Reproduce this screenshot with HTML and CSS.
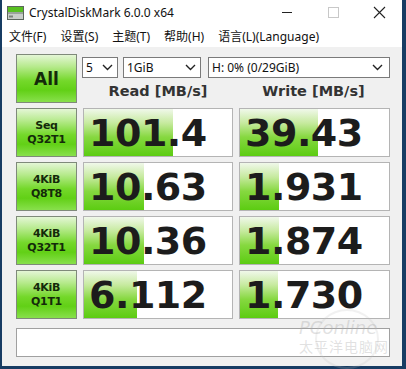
FILE: index.html
```html
<!DOCTYPE html>
<html>
<head>
<meta charset="utf-8">
<link rel="stylesheet" href="styles.css">
</head>
<body>
<div class="window">
  <div class="titlebar">
    <svg class="appicon" width="17" height="14" viewBox="0 0 17 14">
      <rect x="0.5" y="0.5" width="16" height="13" fill="#9aa39a" stroke="#5c665c"/>
      <rect x="1" y="1" width="15" height="5" fill="#58c020"/>
      <rect x="1" y="8" width="15" height="5" fill="#c9cec9"/>
      <rect x="2" y="9.5" width="4" height="2" fill="#7a837a"/>
    </svg>
    <div class="title">CrystalDiskMark 6.0.0 x64</div>
    <div class="controls">
      <svg class="ctl" width="46" height="25" viewBox="0 0 46 25"><line x1="18" y1="12.5" x2="28" y2="12.5" stroke="#222" stroke-width="1"/></svg>
      <svg class="ctl" width="46" height="25" viewBox="0 0 46 25"><rect x="18.5" y="7.5" width="10" height="10" fill="none" stroke="#c8c8c8" stroke-width="1"/></svg>
      <svg class="ctl" width="46" height="25" viewBox="0 0 46 25"><path d="M18 7 L29 18 M29 7 L18 18" stroke="#222" stroke-width="1.1"/></svg>
    </div>
  </div>
  <div class="menubar">
    <span class="menuitem">文件(F)</span>
    <span class="menuitem">设置(S)</span>
    <span class="menuitem">主题(T)</span>
    <span class="menuitem">帮助(H)</span>
    <span class="menuitem">语言(L)(Language)</span>
  </div>
  <div class="content">
    <div class="grid">
      <div class="btn all">All</div>
      <div class="topright">
        <div class="selects">
          <div class="select s-count"><span>5</span><svg width="11" height="7" viewBox="0 0 11 7"><path d="M1 1 L5.5 5.5 L10 1" fill="none" stroke="#222" stroke-width="1.4"/></svg></div>
          <div class="select s-size"><span>1GiB</span><svg width="11" height="7" viewBox="0 0 11 7"><path d="M1 1 L5.5 5.5 L10 1" fill="none" stroke="#222" stroke-width="1.4"/></svg></div>
          <div class="select s-drive"><span>H: 0% (0/29GiB)</span><svg width="11" height="7" viewBox="0 0 11 7"><path d="M1 1 L5.5 5.5 L10 1" fill="none" stroke="#222" stroke-width="1.4"/></svg></div>
        </div>
        <div class="heads">
          <div class="head read">Read [MB/s]</div>
          <div class="head write">Write [MB/s]</div>
        </div>
      </div>

      <div class="btn label">Seq<br>Q32T1</div>
      <div class="val"><div class="bar" style="width:89px"></div><span class="num">101.4</span></div>
      <div class="val"><div class="bar" style="width:78px"></div><span class="num">39.43</span></div>

      <div class="btn label">4KiB<br>Q8T8</div>
      <div class="val"><div class="bar" style="width:60px"></div><span class="num">10.63</span></div>
      <div class="val"><div class="bar" style="width:39px"></div><span class="num">1.931</span></div>

      <div class="btn label">4KiB<br>Q32T1</div>
      <div class="val"><div class="bar" style="width:60px"></div><span class="num">10.36</span></div>
      <div class="val"><div class="bar" style="width:39px"></div><span class="num">1.874</span></div>

      <div class="btn label">4KiB<br>Q1T1</div>
      <div class="val"><div class="bar" style="width:53px"></div><span class="num">6.112</span></div>
      <div class="val"><div class="bar" style="width:38px"></div><span class="num">1.730</span></div>

      <div class="comment"></div>
    </div>
    <div class="watermark">
      <div class="wm-circle"></div>
      <div class="wm-en">PConline</div>
      <div class="wm-cn">太平洋电脑网</div>
    </div>
  </div>
</div>
</body>
</html>
```

FILE: styles.css
```css
* { box-sizing: border-box; }
html, body { margin: 0; padding: 0; }
body {
  width: 406px;
  height: 369px;
  background: #173c63;
  overflow: hidden;
  font-family: "Noto Sans", "Noto Sans CJK SC", sans-serif;
}
.window {
  margin: 0 4px 0 2px;
  height: 366px;
  background: #f0f0f0;
  display: flex;
  flex-direction: column;
}
.titlebar {
  height: 25px;
  background: #ffffff;
  display: flex;
  align-items: center;
}
.appicon { margin-left: 5px; }
.title {
  margin-left: 5px;
  font-size: 12px;
  color: #111;
  flex: 1;
  font-family: "Noto Sans", sans-serif;
}
.controls { display: flex; align-self: flex-start; }
.ctl { display: block; }
.menubar {
  height: 22px;
  background: #ffffff;
  display: flex;
  align-items: center;
  font-size: 12px;
  color: #111;
  font-family: "Noto Sans", "Noto Sans CJK SC", sans-serif;
}
.menuitem { padding: 0 7px; }

.content {
  flex: 1;
  position: relative;
  padding: 7px 13px 0 14px;
}
.grid {
  display: grid;
  grid-template-columns: 61px 150px 151px;
  grid-template-rows: 49px 49px 49px 49px 49px 29px;
  column-gap: 6px;
  row-gap: 5px;
}
.btn {
  border: 1px solid #7f8a7a;
  background: linear-gradient(to bottom, #e4f6d6 0%, #b6ea8c 25%, #74d82a 55%, #62d016 75%, #88e04c 100%);
  display: flex;
  align-items: center;
  justify-content: center;
  text-align: center;
  color: #142a0a;
  font-family: "DejaVu Sans", sans-serif;
  font-weight: bold;
}
.all { font-size: 17px; }
.label { font-size: 11px; line-height: 14px; letter-spacing: -0.3px; }
.topright {
  grid-column: 2 / 4;
  display: flex;
  flex-direction: column;
}
.selects {
  display: flex;
  margin-top: 3px;
  margin-left: -1px;
  height: 21px;
}
.select {
  height: 21px;
  background: #fff;
  border: 1px solid #7a7a7a;
  display: flex;
  align-items: center;
  justify-content: space-between;
  padding: 0 4px 0 3px;
  font-size: 12px;
  color: #111;
  font-family: "Noto Sans", sans-serif;
}
.s-count { width: 36px; }
.s-size { width: 78px; margin-left: 5px; }
.s-drive { width: 182px; margin-left: 7px; padding-right: 6px; }
.heads {
  display: flex;
  margin-top: 5px;
}
.head {
  font-family: "DejaVu Sans", sans-serif;
  font-weight: bold;
  font-size: 14.5px;
  color: #333;
  text-align: center;
}
.read { width: 150px; }
.write { width: 151px; margin-left: 5px; }

.val {
  position: relative;
  background: #fff;
  border: 1px solid #b4b4b4;
  display: flex;
  align-items: center;
  overflow: hidden;
}
.bar {
  position: absolute;
  left: 0;
  top: 0;
  bottom: 0;
  background: linear-gradient(to bottom, #f0f8ea 0%, #c6ea9e 30%, #86d840 60%, #5ccc12 100%);
}
.num {
  position: relative;
  padding-left: 5px;
  font-family: "DejaVu Sans", sans-serif;
  font-weight: bold;
  font-size: 38px;
  line-height: 1;
  color: #1c1c1c;
  letter-spacing: -0.5px;
}
.comment {
  grid-column: 1 / 4;
  margin-top: 4px;
  background: #fff;
  border: 1px solid #a0a0a0;
  height: 29px;
}
.watermark {
  position: absolute;
  left: 295px;
  top: 264px;
  width: 104px;
  height: 56px;
  color: rgba(170, 170, 170, 0.35);
  pointer-events: none;
}
.wm-circle {
  position: absolute;
  left: 18px;
  top: -2px;
  width: 64px;
  height: 60px;
  border-radius: 50%;
  border: 2px solid rgba(190, 190, 190, 0.22);
}
.wm-en {
  position: absolute;
  left: 2px;
  top: 9px;
  font-family: "DejaVu Sans", sans-serif;
  font-size: 18px;
  line-height: 16px;
  font-style: italic;
}
.wm-cn {
  position: absolute;
  left: 2px;
  top: 27px;
  font-size: 14px;
  line-height: 16px;
  letter-spacing: 1px;
  font-family: "Noto Sans CJK SC", sans-serif;
}
```
